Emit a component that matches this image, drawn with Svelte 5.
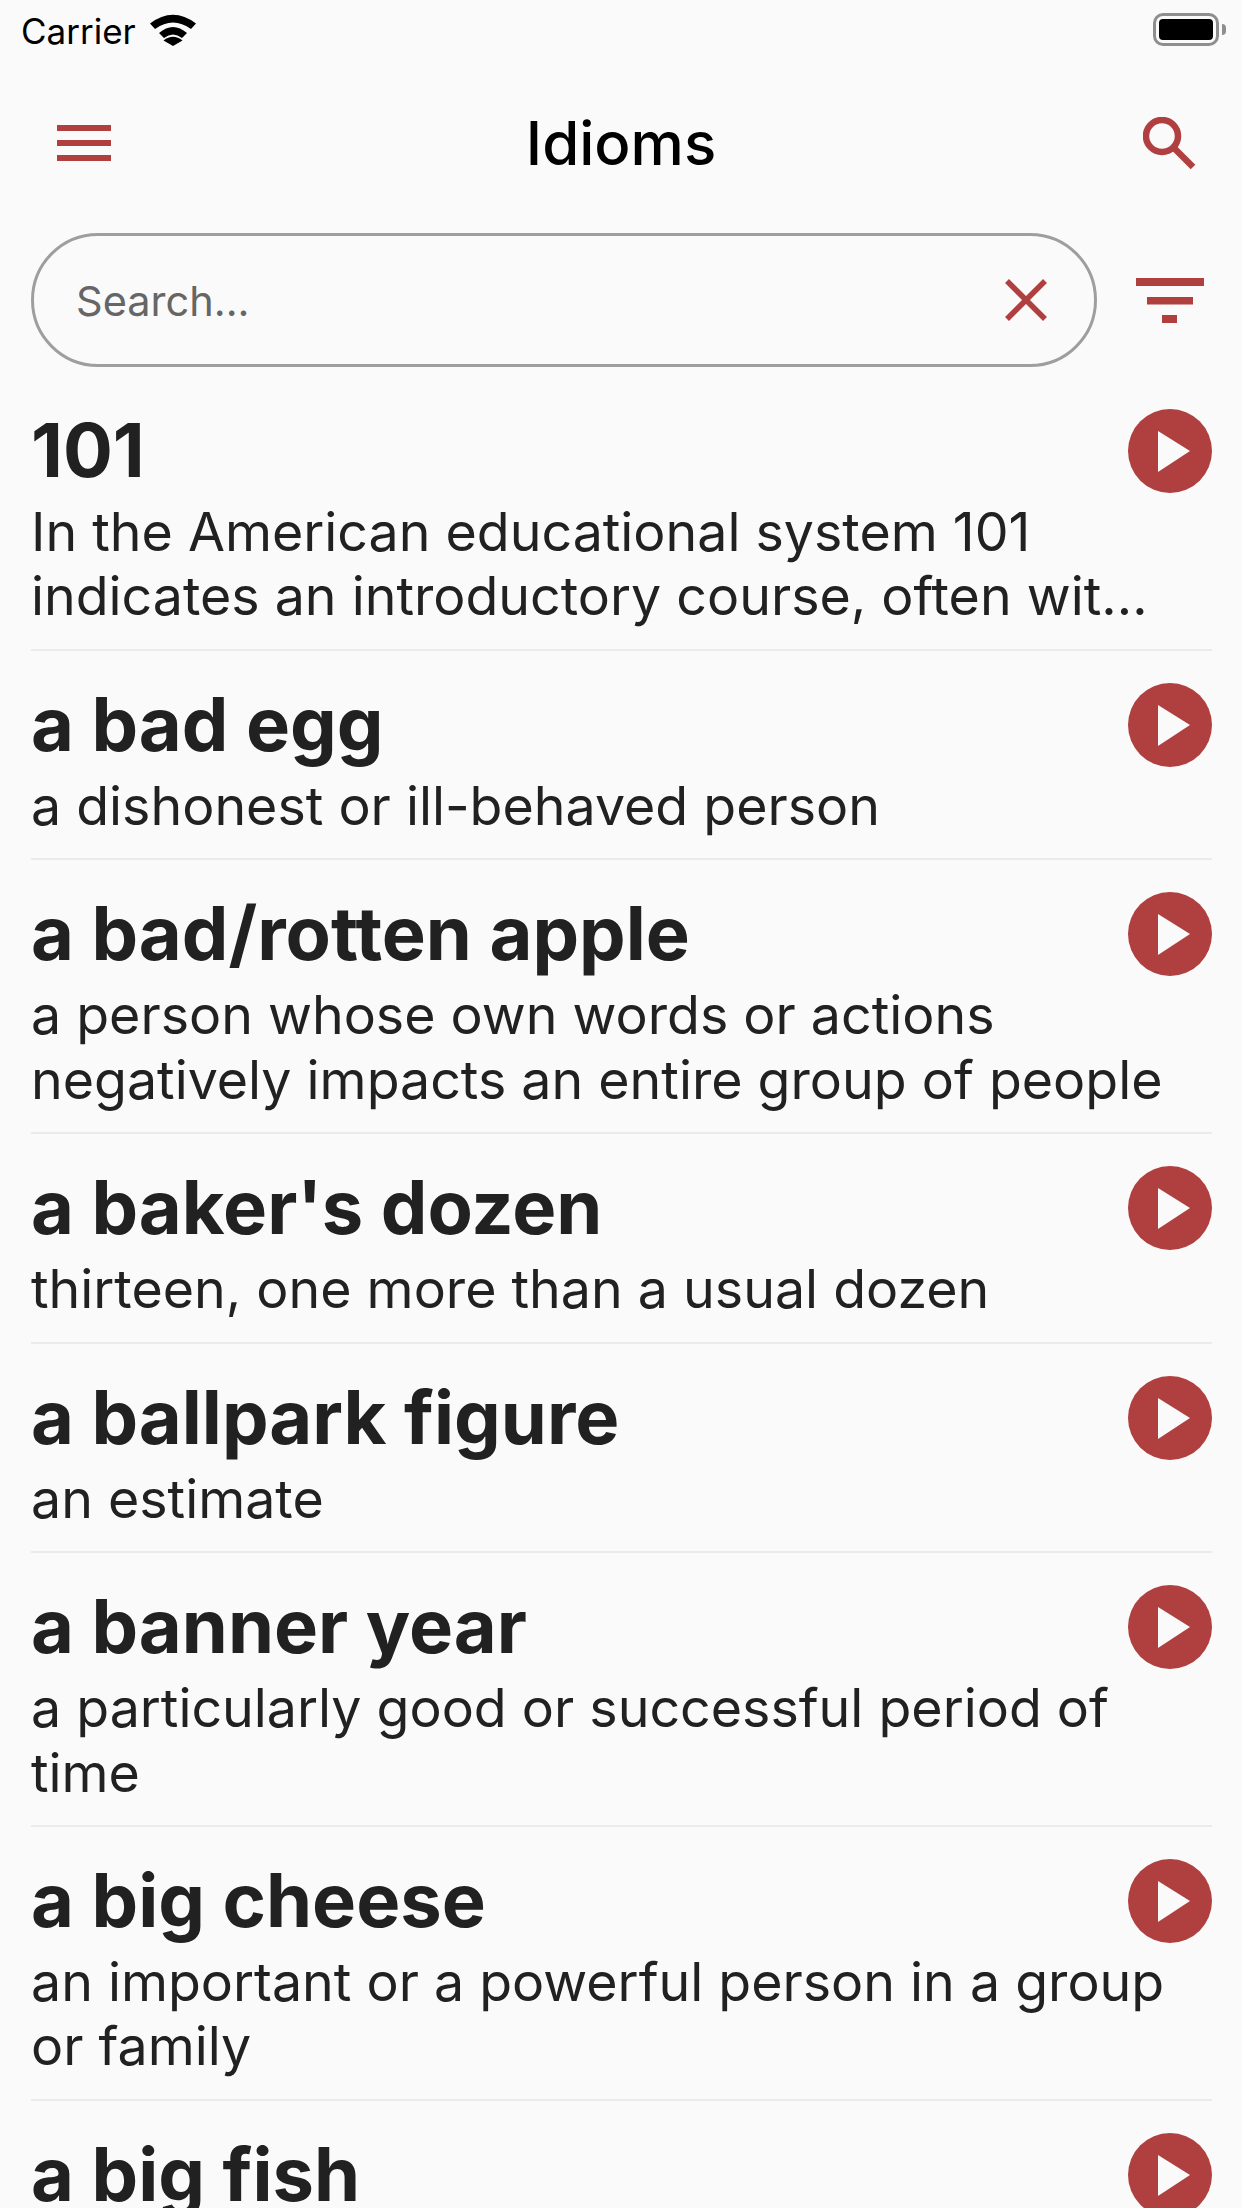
<script>
  const items = [
    { t: '101', d: 'In the American educational system 101 indicates an introductory course, often wit…' },
    { t: 'a bad egg', d: 'a dishonest or ill-behaved person' },
    { t: 'a bad/rotten apple', d: 'a person whose own words or actions negatively impacts an entire group of people' },
    { t: "a baker's dozen", d: 'thirteen, one more than a usual dozen' },
    { t: 'a ballpark figure', d: 'an estimate' },
    { t: 'a banner year', d: 'a particularly good or successful period of time' },
    { t: 'a big cheese', d: 'an important or a powerful person in a group or family' },
    { t: 'a big fish', d: '' }
  ];
</script>

<div class="page">
  <header class="status">
    <span class="carrier">Carrier</span>
    <svg class="wifi" width="46" height="33" viewBox="0 0 46 33">
      <path d="M0 10.500 Q23 -7 46 10.500 L41 16 Q23 3 5 16 Z" />
      <path d="M9 20 Q23 8 37 20 L32 25 Q23 18 14 25 Z" />
      <path d="M23 33 L32.500 27.500 Q23 20 13.500 27.500 Z" />
    </svg>
    <span class="spacer"></span>
    <div class="battery"><div class="cell"></div></div>
    <div class="nub"></div>
  </header>

  <nav class="bar">
    <svg class="ico-menu" width="54" height="36" viewBox="0 0 54 36">
      <rect y="0" width="54" height="6" /><rect y="15" width="54" height="6" /><rect y="30" width="54" height="6" />
    </svg>
    <h1>Idioms</h1>
    <svg class="ico-search" width="56" height="56" viewBox="0 0 56 56">
      <circle cx="19" cy="19" r="16" />
      <path d="M30.500 30.500 L50 50" />
    </svg>
  </nav>

  <div class="searchrow">
    <div class="field">
      <span class="placeholder">Search...</span>
      <svg class="ico-x" width="42" height="42" viewBox="0 0 42 42"><path d="M2 2 L40 40 M40 2 L2 40" /></svg>
    </div>
    <svg class="ico-filter" width="68" height="45" viewBox="0 0 68 45">
      <rect x="0" y="0" width="68" height="8" /><rect x="11" y="19" width="46" height="7.500" /><rect x="26" y="37" width="15" height="8" />
    </svg>
  </div>

  <ul class="list">
    {#each items as it}
      <li class="row">
        <div class="head">
          <h2>{it.t}</h2>
          <div class="play">
            <svg width="84" height="84" viewBox="0 0 84 84"><path d="M30 22 L62 42 L30 63 Z" /></svg>
          </div>
        </div>
        {#if it.d}<p>{it.d}</p>{/if}
      </li>
    {/each}
  </ul>
</div>

<style>
  :global(body) { margin: 0; background: #fafafa; }
  .page {
    width: 1242px; height: 2208px; overflow: hidden; background: #fafafa;
    font-family: Inter, "Liberation Sans", sans-serif; color: #212121;
  }
  .status { height: 60px; display: flex; align-items: flex-start; padding: 0 16px 0 21px; box-sizing: border-box; }
  .carrier { font-size: 35px; line-height: 40px; margin-top: 11px; color: #000; }
  .wifi { margin: 13px 0 0 14px; fill: #000; }
  .spacer { flex: 1; }
  .battery { width: 66px; height: 33px; margin-top: 13px; box-sizing: border-box; border: 3px solid #8e8e8e; border-radius: 10px; padding: 3px; }
  .cell { height: 100%; background: #000; border-radius: 4px; }
  .nub { width: 4px; height: 11px; margin: 24px 0 0 3px; background: #8e8e8e; border-radius: 0 6px 6px 0; }

  .bar { height: 173px; display: grid; grid-template-columns: 1fr auto 1fr; align-items: center; padding: 0 43px 0 57px; box-sizing: border-box; }
  .bar h1 { margin: -8px 0 0; font-size: 60px; font-weight: 500; color: #000; line-height: 1; transform: translateX(-7px); }
  .ico-menu { fill: #b03f3f; margin-top: -8px; }
  .ico-search { fill: none; stroke: #b03f3f; stroke-width: 6.500; margin-top: -3px; justify-self: end; }

  .searchrow { display: flex; align-items: center; padding-left: 31px; height: 134px; }
  .field { width: 1066px; height: 134px; box-sizing: border-box; border: 3px solid #9e9e9e; border-radius: 67px; display: flex; align-items: center; justify-content: space-between; padding: 0 47px 0 42px; }
  .placeholder { font-size: 41.500px; color: #666; margin-top: 2px; }
  .ico-x { fill: none; stroke: #b03f3f; stroke-width: 5.500; }
  .ico-filter { fill: #b03f3f; margin-left: 39px; }

  .list { list-style: none; margin: 10px 0 0; padding: 0 30px 0 31px; }
  .row { border-bottom: 2px solid #ebebeb; padding: 32px 0 20.200px; box-sizing: border-box; }
  .head { display: flex; justify-content: space-between; align-items: flex-start; height: 84px; }
  .row h2 { margin: -1px 0 0; font-size: 74px; font-weight: 700; line-height: 84px; color: #212121; }
  .play { width: 84px; height: 84px; border-radius: 50%; background: #b03f3f; flex: none; }
  .play svg { display: block; fill: #fafafa; }
  .row p { margin: 7px 0 0; font-size: 53.700px; font-weight: 380; line-height: 64.330px; color: #212121; }
</style>
